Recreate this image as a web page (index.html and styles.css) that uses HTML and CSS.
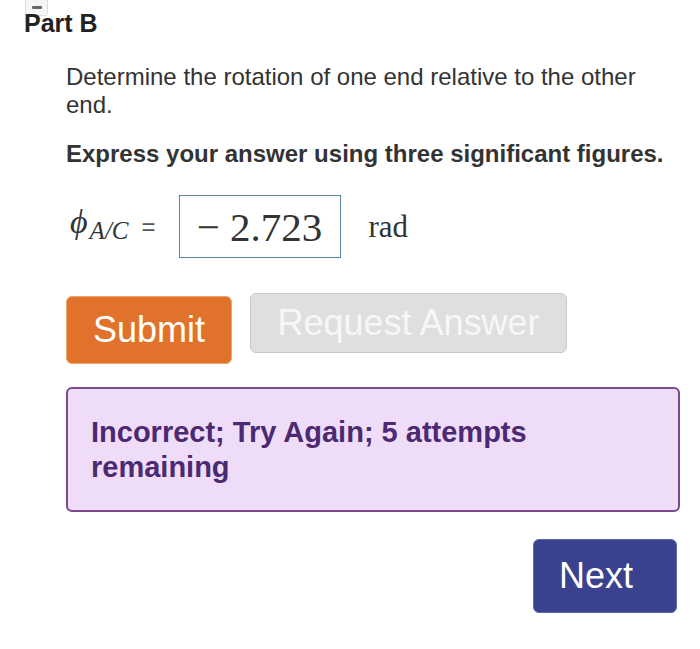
FILE: index.html
```html
<!DOCTYPE html>
<html lang="en">
<head>
  <meta charset="UTF-8">
  <title>Part B</title>
  <link rel="stylesheet" href="styles.css">
</head>
<body>
  <div class="part-header">
    <span class="collapse-toggle"><span class="dash"></span></span>
    <h2>Part B</h2>
  </div>

  <div class="part-body">
    <p class="prompt">Determine the rotation of one end relative to the other end.</p>
    <p class="instructions">Express your answer using three significant figures.</p>

    <div class="answer-row">
      <span class="label"><i class="phi">&#981;</i><sub>A/C</sub></span>
      <span class="equals">=</span>
      <div class="answer-box">&minus; 2.723</div>
      <span class="unit">rad</span>
    </div>

    <div class="buttons">
      <button class="btn-submit">Submit</button>
      <button class="btn-request" disabled>Request Answer</button>
    </div>
  </div>

  <div class="feedback">
    <p>Incorrect; Try Again; 5 attempts remaining</p>
  </div>

  <div class="nav">
    <button class="btn-next">Next</button>
  </div>
</body>
</html>
```

FILE: styles.css
```css
body {
  margin: 0;
  background: #fff;
  color: #333;
  font-family: "Liberation Sans", Arial, sans-serif;
}

.part-header {
  position: relative;
  padding: 9px 0 0 24px;
}
.collapse-toggle {
  position: absolute;
  top: -4px;
  left: 25px;
  width: 23px;
  height: 20px;
  border: 1px solid #ddd;
  border-radius: 3px;
  background: #f6f6f6;
  box-sizing: border-box;
}
.collapse-toggle .dash {
  position: absolute;
  top: 9px;
  left: 6px;
  width: 10px;
  height: 3px;
  border-radius: 1px;
  background: #666;
}
.part-header h2 {
  position: relative;
  margin: 0;
  font-size: 25px;
  line-height: 29px;
  font-weight: bold;
  color: #222;
}

.part-body {
  padding: 0 20px 0 66px;
}
.prompt {
  max-width: 600px;
  margin: 25px 0 0;
  font-size: 24px;
  line-height: 28px;
}
.instructions {
  margin: 21px 0 0;
  font-size: 24px;
  line-height: 28px;
  font-weight: bold;
}

.answer-row {
  display: flex;
  align-items: center;
  margin-top: 27px;
}
.label {
  font-family: "Liberation Serif", "Times New Roman", serif;
  font-size: 34px;
  line-height: 40px;
  color: #333;
  padding-left: 4px;
}
.label .phi {
  font-style: italic;
}
.label sub {
  font-size: 25px;
  font-style: italic;
  vertical-align: -6px;
  margin-left: 2px;
}
.equals {
  margin-left: 13px;
  font-size: 24px;
  color: #555;
}
.answer-box {
  margin-left: 23px;
  width: 162px;
  height: 63px;
  box-sizing: border-box;
  border: 1px solid #5a86aa;
  display: flex;
  align-items: center;
  justify-content: center;
  font-family: "Liberation Serif", "Times New Roman", serif;
  font-size: 41px;
  color: #333;
}
.unit {
  margin-left: 28px;
  font-family: "Liberation Serif", "Times New Roman", serif;
  font-size: 31px;
  color: #333;
}

.buttons {
  display: flex;
  align-items: flex-start;
  gap: 18px;
  margin-top: 35px;
}
.buttons button,
.btn-next {
  font-family: "Liberation Sans", Arial, sans-serif;
  font-size: 36px;
  border-radius: 6px;
  padding: 0;
  cursor: pointer;
}
.btn-submit {
  width: 166px;
  height: 68px;
  margin-top: 3px;
  padding-top: 2px;
  background: #e0722c;
  border: 1px solid #f0a468;
  color: #fff;
}
.btn-request {
  width: 317px;
  height: 60px;
  padding-top: 3px;
  background: #dfdfdf;
  border: 1px solid #c9c9c9;
  color: #f7f7f7;
}

.feedback {
  margin: 23px 20px 0 66px;
  padding: 26px 23px 25px;
  background: #efdcf9;
  border: 2px solid #7a4a8e;
  border-radius: 6px;
}
.feedback p {
  margin: 0;
  max-width: 480px;
  font-size: 29px;
  line-height: 35px;
  font-weight: bold;
  color: #4b2a72;
}

.nav {
  display: flex;
  justify-content: flex-end;
  margin: 27px 23px 0 0;
}
.btn-next {
  width: 144px;
  height: 74px;
  padding-right: 18px;
  background: #3a4290;
  border: 1px solid #5a6ab0;
  color: #fff;
}
```
